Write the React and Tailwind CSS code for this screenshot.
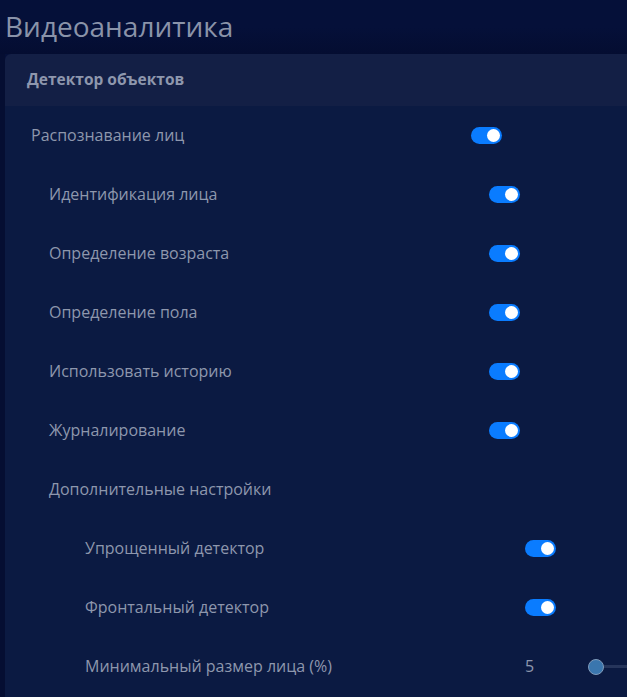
import React from "react";

function Toggle() {
  return (
    <div className="w-[31px] h-[17px] rounded-full bg-[#0a7cff] flex items-center justify-end pr-[2px] shrink-0">
      <div className="w-[13px] h-[13px] rounded-full bg-white" />
    </div>
  );
}

const indent = { 0: "pl-[26px]", 1: "pl-[44px]", 2: "pl-[80px]" };

function Row({ level, label, toggle = false, children }) {
  return (
    <div className={`h-[59px] flex items-center ${indent[level]}`}>
      <div className="w-[440px] shrink-0 text-[16px] leading-[20px] -mt-[2px] text-[#8e97ad]">
        {label}
      </div>
      {toggle && <Toggle />}
      {children}
    </div>
  );
}

export default function App() {
  return (
    <div
      className="w-[627px] h-[697px] overflow-hidden bg-[#051039] flex flex-col"
      style={{ fontFamily: '"Open Sans", "Liberation Sans", Arial, sans-serif' }}
    >
      <div className="h-[54px] shrink-0 flex items-center pl-[5px] bg-gradient-to-b from-[#051039] via-[#051039] to-[#040d31]">
        <h1 className="text-[28px] leading-none text-[#8a93a9] -mt-[3px]">
          Видеоаналитика
        </h1>
      </div>
      <div className="flex-1 flex">
        <div className="w-[5px] bg-[#050e32] shrink-0" />
        <div className="flex-1 flex flex-col rounded-tl-[6px] overflow-hidden">
          <div className="h-[52px] shrink-0 bg-[#131f45] flex items-center pl-[22px]">
            <span className="text-[15.5px] leading-[20px] -mt-[2px] font-bold text-[#8e97ad]">Детектор объектов</span>
          </div>
          <div className="flex-1 bg-[#0b1a42]">
            <Row level={0} label="Распознавание лиц" toggle />
            <Row level={1} label="Идентификация лица" toggle />
            <Row level={1} label="Определение возраста" toggle />
            <Row level={1} label="Определение пола" toggle />
            <Row level={1} label="Использовать историю" toggle />
            <Row level={1} label="Журналирование" toggle />
            <Row level={1} label="Дополнительные настройки" />
            <Row level={2} label="Упрощенный детектор" toggle />
            <Row level={2} label="Фронтальный детектор" toggle />
            <Row level={2} label="Минимальный размер лица (%)">
              <div className="flex items-center flex-1">
                <span className="text-[16px] leading-[20px] -mt-[2px] text-[#8e97ad] w-[63px]">5</span>
                <div className="w-[16px] h-[16px] rounded-full bg-[#3a76ae] border border-[#7f9bbb] shrink-0" />
                <div className="flex-1 h-[3px] bg-[#26355b]" />
              </div>
            </Row>
          </div>
        </div>
      </div>
    </div>
  );
}
